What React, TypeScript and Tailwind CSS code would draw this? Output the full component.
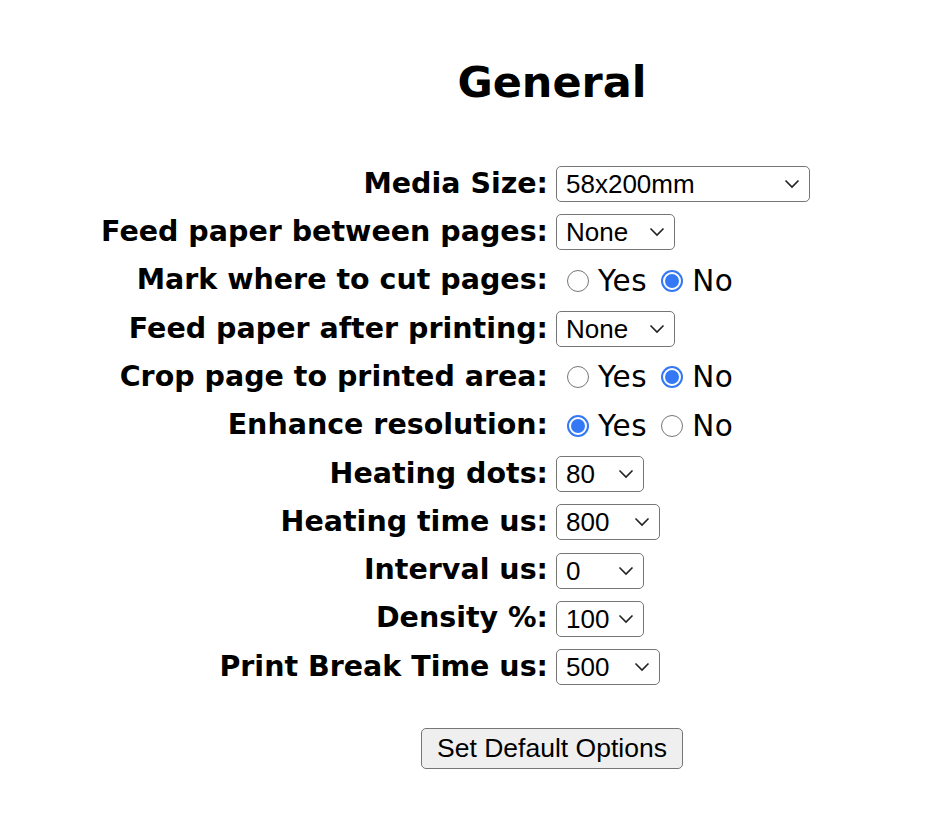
import React from "react";

const labelFont = { fontFamily: '"DejaVu Sans", sans-serif' };

function Chevron() {
  return (
    <svg width="16" height="10" viewBox="0 0 16 10" className="pointer-events-none absolute right-[10px] top-1/2 -translate-y-1/2">
      <path d="M1.5 1.5 L8 8 L14.5 1.5" fill="none" stroke="#222" strokeWidth="1.6" />
    </svg>
  );
}

function Select({ value, width }: { value: string; width: string }) {
  return (
    <div className={`relative ${width}`}>
      <select
        defaultValue={value}
        className="h-[36px] w-full appearance-none rounded-[5px] border-[1.5px] border-[#767676] bg-white pl-[9px] text-[26px] leading-[30px] text-black font-['Liberation_Sans',sans-serif]"
      >
        <option>{value}</option>
      </select>
      <Chevron />
    </div>
  );
}

function Radio({ checked }: { checked: boolean }) {
  return checked ? (
    <span className="inline-flex h-[22px] w-[22px] items-center justify-center rounded-full border-[2px] border-[#3478f6] bg-white">
      <span className="h-[14px] w-[14px] rounded-full bg-[#3478f6]" />
    </span>
  ) : (
    <span className="inline-block h-[22px] w-[22px] rounded-full border-[1.5px] border-[#767676] bg-white" />
  );
}

function YesNo({ yes }: { yes: boolean }) {
  return (
    <div className="flex items-center pl-[11px] text-[29.5px] tracking-[0.5px] text-black" style={labelFont}>
      <Radio checked={yes} />
      <span className="ml-[9px] mr-[14px]">Yes</span>
      <Radio checked={!yes} />
      <span className="ml-[9px]">No</span>
    </div>
  );
}

type Row = { label: string; control: React.ReactNode };

const rows: Row[] = [
  { label: "Media Size:", control: <Select value="58x200mm" width="w-[254px]" /> },
  { label: "Feed paper between pages:", control: <Select value="None" width="w-[119px]" /> },
  { label: "Mark where to cut pages:", control: <YesNo yes={false} /> },
  { label: "Feed paper after printing:", control: <Select value="None" width="w-[119px]" /> },
  { label: "Crop page to printed area:", control: <YesNo yes={false} /> },
  { label: "Enhance resolution:", control: <YesNo yes={true} /> },
  { label: "Heating dots:", control: <Select value="80" width="w-[88px]" /> },
  { label: "Heating time us:", control: <Select value="800" width="w-[104px]" /> },
  { label: "Interval us:", control: <Select value="0" width="w-[88px]" /> },
  { label: "Density %:", control: <Select value="100" width="w-[88px]" /> },
  { label: "Print Break Time us:", control: <Select value="500" width="w-[104px]" /> },
];

export default function App() {
  return (
    <div className="min-h-[840px] w-[936px] bg-white text-black">
      <div className="pl-[168px] pt-[52px]">
        <h2 className="text-center text-[43px] font-bold leading-[60px]" style={labelFont}>
          General
        </h2>
      </div>

      <div className="mt-[48px] grid grid-cols-[548px_auto] gap-x-[8px]">
        {rows.map((r) => (
          <React.Fragment key={r.label}>
            <div className="flex h-[48.3px] items-center justify-end text-[28.5px] font-bold whitespace-nowrap" style={labelFont}>
              {r.label}
            </div>
            <div className="flex h-[48.3px] items-center">{r.control}</div>
          </React.Fragment>
        ))}
      </div>

      <div className="pl-[168px] pt-[37px] flex justify-center">
        <button className="h-[41px] w-[262px] rounded-[5px] border-[1.5px] border-[#767676] bg-[#efefef] text-[26.5px] text-black font-['Liberation_Sans',sans-serif]">
          Set Default Options
        </button>
      </div>
    </div>
  );
}
